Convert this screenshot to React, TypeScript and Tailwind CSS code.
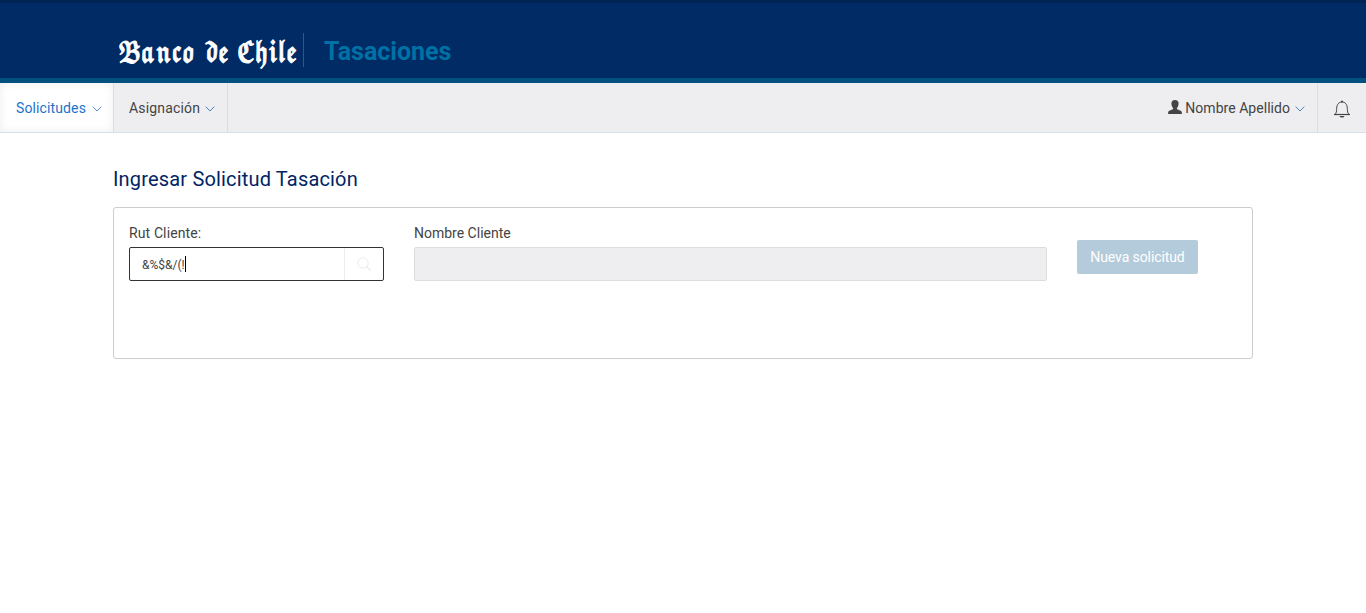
import React from 'react';

function Chevron({ className = '' }: { className?: string }) {
  return (
    <svg className={className} width="10" height="6" viewBox="0 0 10 6" fill="none" stroke="currentColor" strokeWidth="1">
      <path d="M0.7 0.6 5 5 9.3 0.6" />
    </svg>
  );
}

function UserIcon() {
  return (
    <svg className="-mt-0.5" width="14" height="14" viewBox="0 0 14 14" fill="currentColor">
      <path d="M7 0C4.700 0 3.400 1.400 3.400 3.600c0 1.900.7 3.500 1.700 4.500v1C4.600 10 .9 10.300.3 11.800L0 14h14l-.3-2.200c-.6-1.500-4.300-1.800-4.800-2.700v-1c1-1 1.700-2.600 1.700-4.500C10.600 1.400 9.300 0 7 0z" />
    </svg>
  );
}

function BellIcon() {
  return (
    <svg width="16" height="18" viewBox="0 0 16 18" fill="none" stroke="currentColor" strokeWidth="1">
      <path d="M7 1.500h2" strokeWidth="1.400" />
      <path d="M1 14.300C2.400 13 2.600 11.500 2.700 8.500 2.800 4.300 4.800 2 8 2s5.200 2.300 5.300 6.500c.1 3 .3 4.500 1.700 5.800" />
      <path d="M0 14.500h16" strokeWidth="1.200" />
      <path d="M5.500 16h5c-.5 1.100-1.300 1.600-2.500 1.600S6 17.100 5.500 16z" fill="currentColor" stroke="none" />
    </svg>
  );
}

function SearchIcon() {
  return (
    <svg width="14" height="14" viewBox="0 0 14 14" fill="none" stroke="#ececec" strokeWidth="1">
      <circle cx="6" cy="6" r="5.200" />
      <path d="m9.800 9.800 3.700 3.700" strokeWidth="1.300" />
    </svg>
  );
}

function Logo() {
  return (
    <div className="ml-[118px] mt-[30px] flex h-9 w-[180px] shrink-0 text-[27px] leading-[43px] whitespace-nowrap text-white font-['DejaVu_Math_TeX_Gyre','DejaVu_Serif',serif] [-webkit-text-stroke:1.1px_#fff]">
      <span className="w-[86px] origin-left">
        <span className="inline-block origin-left scale-x-[0.72]">𝕭𝖆𝖓𝖈𝖔</span>
      </span>
      <span className="w-[33px]">
        <span className="inline-block origin-left scale-x-[0.72]">𝖉𝖊</span>
      </span>
      <span className="w-[61px]">
        <span className="inline-block origin-left scale-x-[0.74]">𝕮𝖍𝖎𝖑𝖊</span>
      </span>
    </div>
  );
}

export default function App() {
  return (
    <div className="min-h-[613px] bg-white font-['Roboto',sans-serif] text-sm text-[#444]">
      <header className="flex h-[83px] items-start border-t-[3px] border-b-[5px] border-t-[#002554] border-b-[#005080] bg-[#002b64]">
        <Logo />
        <div className="ml-[5px] mt-[30px] h-[34px] w-px bg-[#006c9c]" />
        <h1 className="ml-5 mt-[31px] text-[25px] leading-9 font-bold text-[#0071a5]">Tasaciones</h1>
      </header>

      <nav className="flex h-[50px] border-b border-[#d3e2e8] bg-[#eeeef1]">
        <a className="flex w-[114px] items-center border-r border-[#dcdde0] bg-white pl-4 tracking-[0.12px] text-[#1b74cc] shadow-[inset_0_0_10px_#eeeeee]">
          Solicitudes
          <Chevron className="ml-1.5 mt-0.5 text-[#5b8de0]" />
        </a>
        <a className="flex w-[114px] items-center border-r border-[#dcdde0] pl-[15px] tracking-[0.16px]">
          Asignación
          <Chevron className="ml-[5px] mt-0.5 text-[#4d83bd]" />
        </a>
        <div className="ml-auto flex items-center pr-3">
          <UserIcon />
          <span className="ml-[3px] tracking-[0.04px]">Nombre Apellido</span>
          <Chevron className="ml-[5px] mt-0.5 text-[#4d83bd]" />
        </div>
        <div className="flex w-[49px] items-center justify-center border-l border-[#dcdde0] pt-0.5 pr-px">
          <BellIcon />
        </div>
      </nav>

      <main className="mx-[113px] pt-8">
        <h2 className="text-xl leading-7 tracking-[0.17px] text-[#002464]">Ingresar Solicitud Tasación</h2>
        <section className="mt-[14px] flex h-[152px] rounded-[3px] border border-[#ccc] px-[15px] pt-[15px]">
          <div className="w-[255px]">
            <label className="block leading-5 tracking-[0.12px]">Rut Cliente:</label>
            <div className="mt-1 flex h-[34px] rounded-[2px] border border-[#333]">
              <div className="flex flex-1 items-center pl-3 text-xs">
                <span className="pt-px">&amp;%$&amp;/(!</span>
                <span className="h-4 w-px bg-black" />
              </div>
              <div className="flex w-[39px] items-center justify-center border-l border-[#eee]">
                <SearchIcon />
              </div>
            </div>
          </div>
          <div className="ml-[30px] w-[633px]">
            <label className="block leading-5">Nombre Cliente</label>
            <div className="mt-1 h-[34px] rounded-[2px] border border-[#ddd] bg-[#eeeef0]" />
          </div>
          <button className="mt-[17px] ml-[30px] h-[34px] w-[121px] rounded-[2px] bg-[#b3cbdb] text-sm tracking-[-0.1px] text-white">Nueva solicitud</button>
        </section>
      </main>
    </div>
  );
}
